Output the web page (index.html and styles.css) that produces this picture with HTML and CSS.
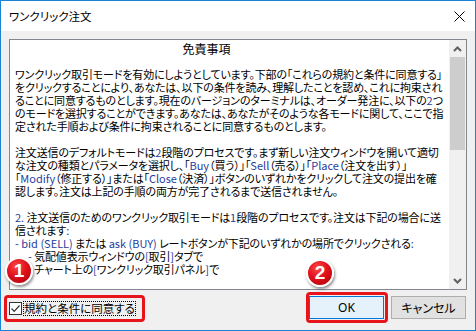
FILE: index.html
```html
<!DOCTYPE html>
<html lang="ja">
<head>
<meta charset="utf-8">
<title>ワンクリック注文</title>
<link rel="stylesheet" href="styles.css">
</head>
<body>
<div class="window">
  <div class="titlebar">
    <span class="title">ワンクリック注文</span>
    <svg class="close" viewBox="0 0 11 11" width="11" height="11"><path d="M0.5 0.5L10.5 10.5M10.5 0.5L0.5 10.5" stroke="#000" stroke-width="1" fill="none"/></svg>
  </div>
  <div class="body">
    <div class="textbox">
      <div class="content">
        <div class="line heading">免責事項</div>
        <div class="line"></div>
        <div class="line">ワンクリック取引モードを有効にしようとしています。下部の「これらの規約と条件に同意する」</div>
        <div class="line">をクリックすることにより、あなたは、以下の条件を読み、理解したことを認め、これに拘束され</div>
        <div class="line">ることに同意するものとします。現在のバージョンのターミナルは、オーダー発注に、以下の<span class="en">2</span>つ</div>
        <div class="line">のモードを選択することができます。あなたは、あなたがそのような各モードに関して、ここで指</div>
        <div class="line">定された手順および条件に拘束されることに同意するものとします。</div>
        <div class="line"></div>
        <div class="line">注文送信のデフォルトモードは<span class="en">2</span>段階のプロセスです。まず新しい注文ウィンドウを開いて適切</div>
        <div class="line">な注文の種類とパラメータを選択し、「<span class="en">Buy</span>（買う）」「<span class="en">Sell</span>（売る）」「<span class="en">Place</span>（注文を出す）」</div>
        <div class="line">「<span class="en">Modify</span>（修正する）」または「<span class="en">Close</span>（決済）」ボタンのいずれかをクリックして注文の提出を確</div>
        <div class="line">認します。注文は上記の手順の両方が完了されるまで送信されません。</div>
        <div class="line"></div>
        <div class="line"><span class="en">2.</span> 注文送信のためのワンクリック取引モードは<span class="en">1</span>段階のプロセスです。注文は下記の場合に送</div>
        <div class="line">信されます<span class="en">:</span></div>
        <div class="line"><span class="en">- bid (SELL)</span> または <span class="en">ask (BUY)</span> レートボタンが下記のいずれかの場所でクリックされる<span class="en">:</span></div>
        <div class="line indent"><span class="en">-</span> 気配値表示ウィンドウの<span class="en">[</span>取引<span class="en">]</span>タブで</div>
        <div class="line indent"><span class="en">-</span> チャート上の<span class="en">[</span>ワンクリック取引パネル<span class="en">]</span>で</div>
      </div>
      <div class="scrollbar">
        <div class="sb-btn"><svg viewBox="0 0 9 6" width="9" height="6"><path d="M1 5L4.5 1.5L8 5" stroke="#606060" stroke-width="2" fill="none"/></svg></div>
        <div class="sb-track"><div class="sb-thumb"></div></div>
        <div class="sb-btn"><svg viewBox="0 0 9 6" width="9" height="6"><path d="M1 1L4.5 4.5L8 1" stroke="#606060" stroke-width="2" fill="none"/></svg></div>
      </div>
    </div>
    <div class="footer">
      <label class="agree">
        <span class="cb"><svg viewBox="0 0 11 11" width="11" height="11"><path d="M1.5 5.5L4.2 8.3L9.5 2.5" stroke="#333" stroke-width="1.2" fill="none"/></svg></span>
        <span class="focus">規約と条件に同意する</span>
      </label>
      <div class="buttons">
        <button class="btn ok">OK</button>
        <button class="btn">キャンセル</button>
      </div>
    </div>
  </div>
  <div class="badge b1">1</div>
  <div class="badge b2">2</div>
</div>
</body>
</html>
```
FILE: styles.css
```css
* { box-sizing: border-box; margin: 0; padding: 0; }
html, body { width: 476px; height: 331px; overflow: hidden; }
body {
  font-family: "Noto Sans CJK JP", "Noto Sans", sans-serif;
  font-size: 11px;
  color: #000;
  background: #fff;
}
.window {
  width: 476px;
  height: 331px;
  border: 1px solid #1883d7;
  background: #f0f0f0;
  display: flex;
  flex-direction: column;
  position: relative;
}
.titlebar {
  height: 30px;
  background: #fff;
  display: flex;
  align-items: center;
  justify-content: space-between;
  padding: 0 10px 0 8px;
}
.title { font-size: 11.5px; line-height: 14px; font-feature-settings: "palt"; }
.close { display: block; }
.body {
  flex: 1;
  padding: 8px 8px 0 8px;
  display: flex;
  flex-direction: column;
}
.textbox {
  height: 251px;
  border: 1px solid #828790;
  background: #fff;
  display: flex;
}
.content {
  flex: 1;
  padding: 2px 5px;
  line-height: 13px;
  white-space: nowrap;
  overflow: hidden;
  font-size: 11px;
  font-feature-settings: "palt";
  letter-spacing: -0.15px;
}
.line { height: 13px; }
.heading { text-align: center; padding-right: 46px; font-size: 12px; letter-spacing: 0; }
.indent { padding-left: 13px; }
.en { color: #1f3c9c; letter-spacing: 0; }
.scrollbar {
  width: 17px;
  background: #f0f0f0;
  display: flex;
  flex-direction: column;
}
.sb-btn {
  height: 17px;
  display: flex;
  align-items: center;
  justify-content: center;
}
.sb-btn svg { display: block; }
.sb-track { flex: 1; padding: 0 1px; }
.sb-thumb { height: 93px; background: #cdcdcd; }
.footer {
  margin-top: 6px;
  height: 23px;
  display: flex;
  align-items: center;
  justify-content: space-between;
}
.agree {
  display: flex;
  align-items: center;
  position: relative;
  margin-top: 1px;
}
.agree::after {
  content: "";
  position: absolute;
  left: -5px;
  right: -9px;
  top: -6px;
  bottom: -6px;
  border: 3px solid #e8141c;
  border-radius: 4px;
}
.cb {
  width: 13px;
  height: 13px;
  border: 1px solid #333;
  background: #fff;
  display: flex;
  align-items: center;
  justify-content: center;
}
.cb svg { display: block; }
.focus {
  margin-left: 1px;
  height: 15px;
  line-height: 15px;
  padding: 0 1px;
  outline: 1px dotted #000;
  outline-offset: -1px;
  font-size: 11.5px;
  font-feature-settings: "palt";
}
.buttons { display: flex; gap: 7px; margin-right: 1px; }
.btn {
  width: 75px;
  height: 23px;
  font-family: "Noto Sans", "Noto Sans CJK JP", sans-serif;
  font-size: 12px;
  font-weight: normal;
  color: #000;
  background: #e1e1e1;
  border: 1px solid #adadad;
  font-feature-settings: "palt";
}
.ok {
  background: #e5f1fb;
  border-color: #0078d7;
  position: relative;
}
.ok::after {
  content: "";
  position: absolute;
  left: -4px;
  right: -5px;
  top: -5px;
  bottom: -5px;
  border: 3px solid #e8141c;
  border-radius: 4px;
}
.badge {
  position: absolute;
  width: 28px;
  height: 28px;
  border-radius: 50%;
  border: 2px solid #fff;
  background: radial-gradient(circle at 40% 30%, #ff4848 0%, #e0121c 45%, #a8000a 100%);
  color: #fff;
  font-family: "Liberation Sans", sans-serif;
  font-weight: bold;
  font-size: 19px;
  display: flex;
  align-items: center;
  justify-content: center;
  box-shadow: 1px 2px 3px rgba(0, 0, 0, 0.45);
}
.b1 { left: 4px; top: 256px; }
.b2 { left: 305px; top: 258px; }
```
